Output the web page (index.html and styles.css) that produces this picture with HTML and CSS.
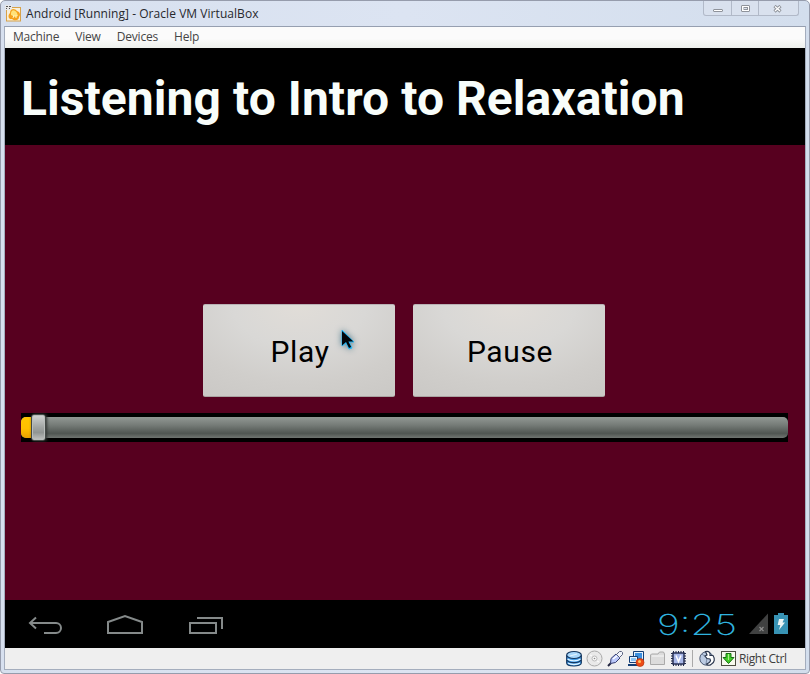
FILE: index.html
```html
<!DOCTYPE html>
<html lang="en">
<head>
<meta charset="utf-8">
<title>Android [Running] - Oracle VM VirtualBox</title>
<link rel="stylesheet" href="styles.css">
</head>
<body>
<div class="window">
  <header class="titlebar">
    <svg class="app-icon" width="17" height="17" viewBox="0 0 17 17">
      <rect x="1.500" y="2.500" width="14" height="13.500" fill="#f8efd9" stroke="#d7a24a"/>
      <path d="M0 0h7v5H0z" fill="#e8e8e8"/><path d="M1 1.500h2M4 1.500h2M1 3.500h1M4 3.500h1" stroke="#555"/>
      <path d="M5 8c0-5 5-5 7-2 3 1 4 4 2 6 0 4-5 4-7 2-3 1-5-3-2-6z" fill="#f5a11c"/>
      <path d="M6 8c1-4 4-3 6 0l1 3-3 1-4-2z" fill="#ffe27a"/><path d="M8 13l1-3M11 13v-3" stroke="#fff2bd"/>
    </svg>
    <h1 class="caption">Android [Running] - Oracle VM VirtualBox</h1>
    <div class="controls">
      <span class="control"><svg width="10" height="8" viewBox="0 0 10 8"><rect x=".5" y="4.500" width="9" height="2" rx=".5" fill="#fff" stroke="#8f939b"/></svg></span>
      <span class="control"><svg width="10" height="8" viewBox="0 0 10 8"><rect x=".5" y=".5" width="8" height="6" rx=".5" fill="#fff" stroke="#8f939b"/><rect x="3" y="2.500" width="3.500" height="2" fill="#dce3ee" stroke="#8f939b"/></svg></span>
      <span class="control wide"><svg width="10" height="8" viewBox="0 0 10 8"><path d="M1.500 1l6 5.500M7.500 1l-6 5.500" stroke="#8f939b" stroke-width="3.200"/><path d="M2 1.500l5 4.500M7 1.500l-5 4.500" stroke="#fff" stroke-width="1.300"/></svg></span>
    </div>
  </header>
  <div class="client">
    <nav class="menu"><span>Machine</span><span>View</span><span>Devices</span><span>Help</span></nav>
    <main class="screen">
      <h2 class="heading">Listening to Intro to Relaxation</h2>
      <section class="player">
        <div class="buttons">
          <button class="button">Play<svg class="cursor" width="30" height="34" viewBox="0 0 30 34">
            <path class="glow" d="M9 5v16l4-3 3 6 3-1-3-6h5z"/>
            <path d="M9 6v14.500l4-3.500 3 6 2.200-1-2.800-5.500h5z" fill="#02060a"/></svg></button>
          <button class="button">Pause</button>
        </div>
        <div class="seek"><div class="track"><div class="progress"></div></div><div class="thumb"></div></div>
      </section>
      <footer class="sysbar">
        <svg class="nav-icons" width="210" height="48" viewBox="0 0 210 48" fill="none" stroke="#858a8a" stroke-width="2">
          <path d="M30.500 17.500l-6 5.500 6 5.500M25 23h25.500a5 5 0 0 1 0 10H38.500"/>
          <path d="M103 33V22l17-6 17 6v11z"/>
          <path d="M185 23h26v10h-26zM192 18h25v11"/>
        </svg>
        <svg class="clock" width="82" height="28" viewBox="0 0 82 28"><text x="0" y="24" textLength="80" lengthAdjust="spacingAndGlyphs">9:25</text></svg>
        <svg class="signal" width="19" height="22" viewBox="0 0 19 22"><path d="M0 21L19 .5V21z" fill="#404141"/><path d="M10.500 14l4 4M14.500 14l-4 4" stroke="#8e8e8e" stroke-width="1.200"/></svg>
        <svg class="battery" width="14" height="21" viewBox="0 0 14 21"><path d="M0 2h4V0h6v2h4v19H0z" fill="#3893b4"/><path d="M5 6h5L8.500 9.500H11L5 17l1.300-5H3.700z" fill="#edf5f4"/></svg>
      </footer>
    </main>
    <footer class="status">
      <svg width="16" height="18" viewBox="0 0 16 18"><path d="M.7 5v8c0 4 14.600 4 14.600 0V5" fill="#3e9bea" stroke="#15375f" stroke-width="1.200"/><ellipse cx="8" cy="5" rx="7.300" ry="3.500" fill="#a9d8fc" stroke="#15375f" stroke-width="1.200"/><path d="M4 6l7-2M1.500 9c3 2.500 10 2.500 13 0M2 13c3 2 9 2 12 0" stroke="#e2f4ff" stroke-width="1.300" fill="none"/><path d="M.8 10c2 3.500 12 3.500 14.400 0" fill="none" stroke="#15375f" stroke-width="1.200"/></svg>
      <svg width="17" height="17" viewBox="0 0 17 17"><circle cx="8.500" cy="8.500" r="7.500" fill="#e9e9e9" stroke="#aaa"/><circle cx="8.500" cy="8.500" r="2.500" fill="#f8f8f8" stroke="#bbb"/><circle cx="8.500" cy="8.500" r=".8" fill="#888"/><path d="M4 5l2 1M11 11l2 1" stroke="#fff"/></svg>
      <svg width="17" height="17" viewBox="0 0 17 17"><path d="M1 16l3-3" stroke="#20243f" stroke-width="2"/><path d="M3.500 13.500l.5-5L9 4l4 4-4.500 4.500z" fill="#bac8fa" stroke="#353d70"/><path d="M9.500 4.500l3-3h2l1 1v2l-3 3z" fill="#f3f5fc" stroke="#58617d"/><path d="M6 9l4-3" stroke="#fff" stroke-width="1.500"/></svg>
      <svg width="17" height="17" viewBox="0 0 17 17"><path d="M5.500 1.500h10v9h-10z" fill="#e4f2ff" stroke="#143e75"/><path d="M7 3h7v6H7z" fill="#3b8fdf"/><path d="M1.500 6.500h8v6h-8z" fill="#e4f2ff" stroke="#143e75"/><path d="M3 8h5v3H3z" fill="#8cc5f5"/><path d="M0 15h10" stroke="#143e75" stroke-width="2"/><circle cx="12" cy="12.500" r="4" fill="#ed4c18" stroke="#b4330c" stroke-width=".7"/><circle cx="11.500" cy="11.500" r="1.500" fill="#ffc65d"/></svg>
      <svg width="17" height="17" viewBox="0 0 17 17"><path d="M1.500 14.500V5l1-1H9l1.500-2h4l1 2v10.500z" fill="#dcdcdc" stroke="#aaa"/><path d="M3 6h12" stroke="#f7f7f7"/></svg>
      <svg width="17" height="17" viewBox="0 0 17 17"><path d="M3.500 1v15M6 1v15M8.500 1v15M11 1v15M13.500 1v15M1 3.500h15M1 6h15M1 8.500h15M1 11h15M1 13.500h15" stroke="#20294c"/><rect x="3" y="3" width="11" height="11" fill="#a9b8e8" stroke="#20294c" stroke-width="1.400"/><path d="M6 5.500l2.500 6 2.500-6" fill="none" stroke="#fff" stroke-width="1.500"/></svg>
      <i class="divider"></i>
      <svg width="17" height="17" viewBox="0 0 17 17"><circle cx="7.500" cy="8.500" r="6.700" fill="#bbcbe3" stroke="#465570"/><path d="M3 4l5 4-1 6" stroke="#7c8ca6" fill="none"/><path d="M6.500 1.500c4-1 5 2 4.500 4h3c2 3 2 7-2 9-2 1.500-4 .5-4.500-.5 3-1 5-3 3.500-5L8 8.500 6 6l2-1z" fill="#fff" stroke="#2c384f" stroke-width="1.200"/></svg>
      <svg width="17" height="17" viewBox="0 0 17 17"><rect x="1.500" y="1.500" width="14" height="14" fill="#f7faee" stroke="#4c4d42"/><path d="M6 3.500h5v4h3l-5.500 6-5.500-6h3z" fill="#43ca28" stroke="#147111"/><path d="M8.500 4v6" stroke="#a7f283"/></svg>
      <span class="host-key">Right Ctrl</span>
    </footer>
  </div>
</div>
</body>
</html>
```
FILE: styles.css
```css
* { box-sizing: border-box; }
body { margin: 0; width: 810px; height: 674px; overflow: hidden; background: #fff; }
h1, h2 { margin: 0; font-weight: 400; }
svg { display: block; flex: none; }

.window {
  height: 674px;
  padding: 0 3px 3px;
  border: 1px solid #969cac;
  border-radius: 5px 5px 4px 4px;
  background: linear-gradient(90deg, #d7e0ef, #dce4f2 50%, #d3deed);
  display: flex;
  flex-direction: column;
  font-family: "Open Sans", sans-serif;
  font-size: 12px;
  color: #454545;
}
.titlebar { height: 25px; display: flex; align-items: flex-start; padding: 0 7px 0 1px; flex: none; }
.app-icon { margin-top: 4px; }
.caption { font-size: 12px; line-height: 17px; margin: 4px 0 0 4px; color: #27282d; letter-spacing: .05px; white-space: nowrap; }
.controls { margin-left: auto; display: flex; height: 15px; border: 1px solid #b1b9c8; border-top: 0; border-radius: 0 0 3px 3px; background: #d9e1ee; }
.control { width: 28px; padding: 4px 0 0 9px; border-right: 1px solid #b1b9c8; }
.control + .control { width: 27px; }
.control.wide { width: 39px; padding-left: 14px; border: 0; }
.client { flex: 1; border: 1px solid #a4adbd; border-top-color: #969fb0; width: 802px; display: flex; flex-direction: column; background: #efefef; }
.menu { height: 21px; display: flex; gap: 16px; padding: 1px 8px 0; line-height: 17px; background: linear-gradient(#fbfbfb 55%, #edf0ec); letter-spacing: -.2px; color: #454545; }

.screen { height: 600px; background: #57001f; display: flex; flex-direction: column; font-family: Roboto, sans-serif; }
.heading { height: 97px; background: #000; color: #f8fdfa; font-size: 48px; font-weight: 700; line-height: 102px; letter-spacing: .06px; padding-left: 16px; white-space: nowrap; flex: none; }
.player { height: 455px; padding: 159px 16px 0; }
.buttons { display: flex; gap: 18px; padding-left: 182px; }
.button {
  position: relative;
  width: 192px;
  height: 93px;
  padding: 3px 0 0 2px;
  border: 0;
  border-radius: 2px;
  border-top: 1px solid #b9b2b5;
  border-bottom: 1px solid #aaa3a1;
  background: radial-gradient(ellipse 190px 120px at 50% 0, #e1ddd8 0, #d9d8d6 35%, #d0cecb 65%, #c8c6c3 100%);
  font: 400 30px/36px Roboto, sans-serif;
  letter-spacing: .6px;
  color: #000;
}
.cursor { position: absolute; left: 130px; top: 20px; overflow: visible; }
.glow { fill: #27b8f5; stroke: #27b8f5; stroke-width: 1px; filter: drop-shadow(0 0 3px #517b8d); }
.seek { position: relative; margin-top: 16px; width: 767px; height: 29px; padding: 4px 0; background: #000; }
.track { height: 21px; border-radius: 5px; overflow: hidden; background: linear-gradient(#929894, #747a76 40%, #505652 78%, #707571); }
.progress { width: 18px; height: 21px; background: linear-gradient(#ffc600, #ffbf00 55%, #e9a000); }
.thumb { position: absolute; left: 10px; top: 1px; width: 15px; height: 27px; border: 1px solid #444946; border-radius: 3px; background: linear-gradient(#d3d5d4, #a0a4a2 50%, #919593 70%, #c2c4c2); box-shadow: inset 0 0 0 1px #b9bdbb, 1px 0 3px #303532; }

.sysbar { height: 48px; display: flex; background: #000; }
.nav-icons { overflow: visible; }
.nav-icons path:first-child { transform: translateX(.5px); }
.clock { margin: 11px 0 0 442px; overflow: visible; fill: #2fb2df; font: 200 29px Inter, sans-serif; }
.signal { margin: 13px 0 0 10px; }
.battery { margin: 13px 0 0 6px; }

.status { height: 21px; display: flex; align-items: center; gap: 4px; padding-left: 561px; letter-spacing: -.38px; }
.divider { width: 1px; height: 17px; margin: 0 2px 0 1px; background: #aaa; }
.host-key { margin-left: -2px; color: #3d3d3d; white-space: nowrap; }
```
